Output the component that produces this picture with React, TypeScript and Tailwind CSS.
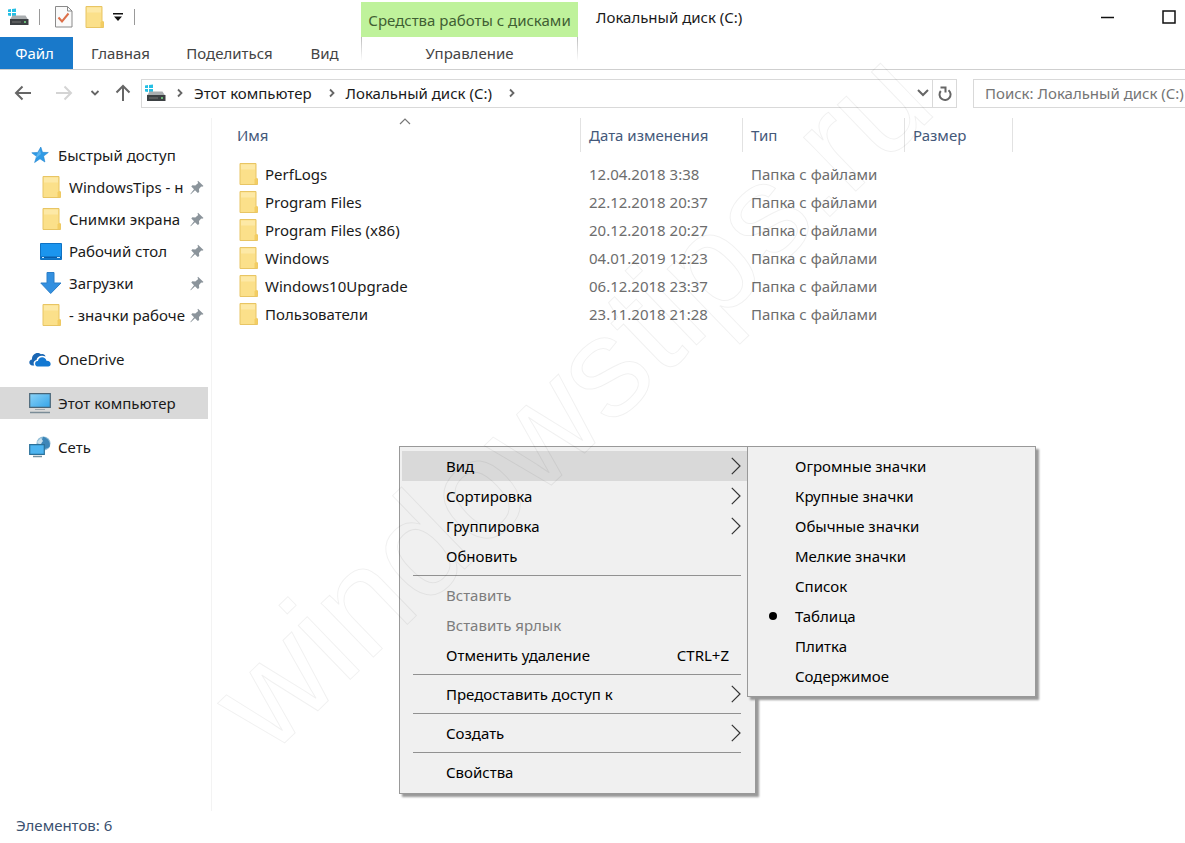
import React, { useState } from "react";
import clsx from "clsx";

type MenuEntry =
    | { kind: "item"; label: string; disabled?: boolean; shortcut?: string; submenu?: boolean }
    | { kind: "separator" };

const files = [
    { name: "PerfLogs", date: "12.04.2018 3:38" },
    { name: "Program Files", date: "22.12.2018 20:37" },
    { name: "Program Files (x86)", date: "20.12.2018 20:27" },
    { name: "Windows", date: "04.01.2019 12:23" },
    { name: "Windows10Upgrade", date: "06.12.2018 23:37" },
    { name: "Пользователи", date: "23.11.2018 21:28" },
];

const menuEntries: MenuEntry[] = [
    { kind: "item", label: "Вид", submenu: true },
    { kind: "item", label: "Сортировка", submenu: true },
    { kind: "item", label: "Группировка", submenu: true },
    { kind: "item", label: "Обновить" },
    { kind: "separator" },
    { kind: "item", label: "Вставить", disabled: true },
    { kind: "item", label: "Вставить ярлык", disabled: true },
    { kind: "item", label: "Отменить удаление", shortcut: "CTRL+Z" },
    { kind: "separator" },
    { kind: "item", label: "Предоставить доступ к", submenu: true },
    { kind: "separator" },
    { kind: "item", label: "Создать", submenu: true },
    { kind: "separator" },
    { kind: "item", label: "Свойства" },
];

const viewModes = [
    "Огромные значки",
    "Крупные значки",
    "Обычные значки",
    "Мелкие значки",
    "Список",
    "Таблица",
    "Плитка",
    "Содержимое",
];

const FolderIcon = () => (
    <svg width="19" height="22" viewBox="0 0 19 22" className="shrink-0">
        <path d="M1 .5h16v14l1.500 1.500v5.500H1z" fill="#fbe08a" stroke="#e8c564" />
        <path d="M2 1.500h14v5H2z" fill="#fde9a6" />
        <path d="M15.500 21v-4.500l1.500-2 1.500 1.500V21z" fill="#f3cd63" />
    </svg>
);

const DriveIcon = () => (
    <svg width="21" height="18" viewBox="0 0 21 18" className="shrink-0">
        <path d="M0 1.500l3-.5v3H0zM4 1l4-.5V4H4zM0 5h3v3l-3-.5zM4 5h4v3.500L4 8z" fill="#25bfe4" />
        <path d="M4.500 7.500h13l2.500 4H2z" fill="#a9adaf" />
        <path d="M2 11h18.500v6H2z" fill="#3c4043" />
        <path d="M4 14h9" stroke="#777" />
        <path d="M16 14h2" stroke="#7be08a" strokeWidth="1.500" />
    </svg>
);

const StarIcon = () => (
    <svg width="18" height="18" viewBox="0 0 18 18">
        <path d="M9.800 1l1.700 5.300 5.800.2-4.700 3.600 1.300 5.900-4.900-3.200-5.400 3.700 2-6L.8 6.800l6-.4z" fill="#2f9be6" stroke="#1e83d0" strokeWidth=".6" />
        <path d="M9 4l1 4-6 5 2-4.500z" fill="#7cc6f5" opacity=".6" />
    </svg>
);

const DesktopIcon = () => (
    <svg width="22" height="17" viewBox="0 0 22 17">
        <path d="M.5 .5h21v16H.5z" fill="#1b95ee" stroke="#0e72c4" />
        <path d="M1 14.500h20" stroke="#0a5ca8" strokeWidth="2" />
        <path d="M2 14.500h2M17 14.500h3" stroke="#cbe7fb" />
    </svg>
);

const DownloadIcon = () => (
    <svg width="22" height="22" viewBox="0 0 22 22">
        <path d="M7 .5h7V11h7L10.700 21.500.8 11H7z" fill="#3390e0" stroke="#2b7ec8" />
    </svg>
);

const PinIcon = () => (
    <svg width="14" height="15" viewBox="0 0 14 15" className="shrink-0">
        <path d="M8 .8L13.500 6l-1.300.8-1-.2L9 9l.2 3-1.400.9L5 10.200.8 14.300.3 14 4 9.200 1.300 6.500l1-1.200 3 .1L8.200 3 7.500 1.800z" fill="#8b949b" />
    </svg>
);

const CloudIcon = () => (
    <svg width="22" height="15" viewBox="0 0 22 15">
        <path d="M3 13.500C-.8 12.500-.3 7.800 3 7.500 2.500 2 8.500-1 12 2.300c2-.8 4 .2 4.600 2.200C11.500 2.500 8 5 7.500 8 4.500 8.500 4 11.500 5.300 13.500z" fill="#1a66b3" />
        <path d="M8.500 14.500c-3.500-.5-3-5.700.4-5.400.6-5 7.700-5 8.600-.3 4.800-.3 5.500 5.200 1.700 5.700z" fill="#1378d2" />
    </svg>
);

const ComputerIcon = () => (
    <svg width="22" height="21" viewBox="0 0 22 21">
        <defs>
            <linearGradient id="screen" x1="0" y1="0" x2="1" y2="1">
                <stop offset="0" stopColor="#8bd3f8" />
                <stop offset="1" stopColor="#35a4e8" />
            </linearGradient>
        </defs>
        <path d="M.7 .7h20.600v13.600H.7z" fill="url(#screen)" stroke="#4a6577" strokeWidth="1.200" />
        <path d="M6 16.500h10" stroke="#a0a8ad" />
        <path d="M1 19.500h20" stroke="#7b8c97" strokeWidth="1.500" />
    </svg>
);

const NetworkIcon = () => (
    <svg width="22" height="22" viewBox="0 0 22 22">
        <circle cx="14.500" cy="7.500" r="7" fill="#8fbcd6" />
        <path d="M14 .7c5 1 8 6 6.500 10.500L16 13l-4-6z" fill="#3d86b8" />
        <path d="M8 6l4-4 2 3-3 4z" fill="#c9dfeb" />
        <path d="M.7 8.700h14.600v9.600H.7z" fill="#4db4f0" stroke="#2b7099" strokeWidth="1.200" />
        <path d="M4 20.500h9" stroke="#76919f" strokeWidth="1.500" />
    </svg>
);

// Small chevron used in the address bar; rotated for the other directions
const Chevron = ({ className }: { className?: string }) => (
    <svg width="8" height="10" viewBox="0 0 8 10" fill="none" stroke="currentColor" strokeWidth="1.800" className={className}>
        <path d="M2 1.500L5.500 5 2 8.500" />
    </svg>
);

const MenuArrow = () => (
    <svg width="10" height="18" viewBox="0 0 10 18" fill="none" stroke="#333" strokeWidth="1.200">
        <path d="M.8 .8L9 9 .8 17.200" />
    </svg>
);

const Arrow = ({ className }: { className?: string }) => (
    <svg width="18" height="16" viewBox="0 0 18 16" fill="none" stroke="currentColor" strokeWidth="2" className={className}>
        <path d="M17 8H2M8.500 1.500L2 8l6.500 6.500" />
    </svg>
);

const TitleBar = () => (
    <header className="flex h-[70px] border-b border-[#cfcfcf]">
        <div className="flex w-[361px] shrink-0 flex-col">
            <div className="flex h-[38px] items-center pb-1 pl-2">
                <DriveIcon />
                <span className="ml-[10px] h-4 w-px bg-[#999]" />
                <button aria-label="Свойства" className="ml-[15px]">
                    <svg width="18" height="22" viewBox="0 0 18 22" fill="none">
                        <path d="M.5 .5h12l4.500 4.500v16H.5z" fill="#fafafa" stroke="#8a8a8a" />
                        <path d="M12.500 .5V5H17" stroke="#8a8a8a" />
                        <path d="M3.500 11.500l3.500 4 6.500-8" stroke="#dc6f49" strokeWidth="2" />
                    </svg>
                </button>
                <button aria-label="Новая папка" className="ml-3">
                    <FolderIcon />
                </button>
                <button aria-label="Настройка панели" className="ml-[9px]">
                    <svg width="10" height="8" viewBox="0 0 10 8">
                        <path d="M0 0h10v1.500H0zM1 3.500h8L5 8z" fill="#111" />
                    </svg>
                </button>
                <span className="ml-[11px] h-4 w-px bg-[#999]" />
            </div>
            <nav className="flex h-8 text-[#444]">
                <button className="w-[73px] shrink-0 bg-[#1979ca] pr-1 text-white">Файл</button>
                <button className="w-[95px]">Главная</button>
                <button className="w-[123px]">Поделиться</button>
                <button className="w-[67px]">Вид</button>
            </nav>
        </div>
        <div className="flex w-[217px] shrink-0 flex-col">
            <div className="flex h-[38px] items-center justify-center border-t-2 border-white bg-[#bff29b] whitespace-nowrap text-[#3f5f33]">
                Средства работы с дисками
            </div>
            <div className="flex h-8 justify-between">
                <span className="h-6 w-px bg-linear-to-b from-[#bbb] to-white" />
                <button className="text-[#444]">Управление</button>
                <span className="h-6 w-px bg-linear-to-b from-[#bbb] to-white" />
            </div>
        </div>
        <h1 className="h-[38px] flex-1 pt-[7px] pl-[18px]">Локальный диск (C:)</h1>
        <div className="flex h-[34px] items-center gap-12 pr-[9px]">
            <button aria-label="Свернуть">
                <svg width="13" height="13" viewBox="0 0 13 13" stroke="#111" strokeWidth="1.500">
                    <path d="M0 6.500h13" />
                </svg>
            </button>
            <button aria-label="Развернуть">
                <svg width="14" height="14" viewBox="0 0 14 14" fill="none" stroke="#111" strokeWidth="1.500">
                    <path d="M1 1h12v12H1z" />
                </svg>
            </button>
        </div>
    </header>
);

const AddressBar = () => (
    <div className="flex h-12 items-center pb-[2px]">
        <div className="flex w-[141px] shrink-0 items-center pl-[14px] text-[#666]">
            <button aria-label="Назад"><Arrow /></button>
            <button aria-label="Вперёд" className="ml-[23px] text-[#d4d4d4]"><Arrow className="rotate-180" /></button>
            <button aria-label="Последние" className="ml-[18px]"><Chevron className="rotate-90" /></button>
            <button aria-label="Вверх" className="ml-[15px]"><Arrow className="rotate-90" /></button>
        </div>
        <div className="flex h-[29px] min-w-0 flex-1 items-center border border-[#d9d9d9] pl-[3px] text-[#666]">
            <DriveIcon />
            <Chevron className="ml-[10px]" />
            <button className="ml-[10px] whitespace-nowrap text-[#1a1a1a]">Этот компьютер</button>
            <Chevron className="ml-4" />
            <button className="ml-[10px] whitespace-nowrap text-[#1a1a1a]">Локальный диск (C:)</button>
            <Chevron className="ml-4" />
            <button aria-label="Предыдущие расположения" className="ml-auto pr-[3px]">
                <svg width="12" height="8" viewBox="0 0 12 8" fill="none" stroke="#666" strokeWidth="2">
                    <path d="M1 1l5 5 5-5" />
                </svg>
            </button>
            <button aria-label="Обновить" className="flex h-full w-6 items-center justify-center border-l border-[#d9d9d9]">
                <svg width="14" height="15" viewBox="0 0 14 15" fill="none" stroke="#666" strokeWidth="2">
                    <path d="M2.800 5a5.500 5.500 0 1 0 7.700-.800" />
                    <path d="M2.500 1.500h5v5" />
                </svg>
            </button>
        </div>
        <input
            type="text"
            aria-label="Поиск"
            placeholder="Поиск: Локальный диск (C:)"
            className="ml-4 h-[29px] w-[212px] shrink-0 border border-r-0 border-[#d9d9d9] pl-[11px] outline-none placeholder:text-[#757575]"
        />
    </div>
);

interface QuickLinkProps {
    icon: React.ReactNode;
    label: string;
}

const QuickLink: React.FC<QuickLinkProps> = ({ icon, label }) => (
    <li>
        <a href="#" className="flex h-8 items-center pl-10">
            <span className="flex w-[22px] shrink-0 justify-center">{icon}</span>
            <span className="ml-[7px] w-[118px] overflow-hidden whitespace-nowrap">{label}</span>
            <span className="ml-[3px]"><PinIcon /></span>
        </a>
    </li>
);

const SideLink: React.FC<QuickLinkProps & { selected?: boolean }> = ({ icon, label, selected }) => (
    <a href="#" className={clsx("flex h-8 items-center pl-[29px]", selected && "bg-[#d9d9d9]")}>
        <span className="flex w-[22px] shrink-0 justify-center">{icon}</span>
        <span className="ml-[7px] whitespace-nowrap">{label}</span>
    </a>
);

const Sidebar = () => (
    <nav className="w-[212px] shrink-0 border-r border-[#f3f3f3] pt-[21px] pr-[3px] text-[#1a1a1a]">
        <div className="flex flex-col gap-3">
            <div>
                <SideLink icon={<StarIcon />} label="Быстрый доступ" />
                <ul>
                    <QuickLink icon={<FolderIcon />} label="WindowsTips - н" />
                    <QuickLink icon={<FolderIcon />} label="Снимки экрана" />
                    <QuickLink icon={<DesktopIcon />} label="Рабочий стол" />
                    <QuickLink icon={<DownloadIcon />} label="Загрузки" />
                    <QuickLink icon={<FolderIcon />} label="- значки рабоче" />
                </ul>
            </div>
            <SideLink icon={<CloudIcon />} label="OneDrive" />
            <SideLink icon={<ComputerIcon />} label="Этот компьютер" selected />
            <SideLink icon={<NetworkIcon />} label="Сеть" />
        </div>
    </nav>
);

const FileTable = () => (
    <table className="w-[801px] table-fixed text-left whitespace-nowrap">
        <colgroup>
            <col className="w-[369px]" />
            <col className="w-[162px]" />
            <col className="w-[162px]" />
            <col className="w-[108px]" />
        </colgroup>
        <thead>
            <tr>
                {["Имя", "Дата изменения", "Тип", "Размер"].map((title, i) => (
                    <th key={title} className="relative p-0 pb-2 font-normal text-[#44597a]">
                        <div className={clsx("flex h-[34px] items-center border-r border-[#e2e2e2]", i === 0 ? "pl-[25px]" : "pl-2")}>
                            {title}
                        </div>
                        {i === 0 && (
                            <svg width="12" height="7" viewBox="0 0 12 7" fill="none" stroke="#777" strokeWidth="1.200" className="absolute top-0 left-[187px]">
                                <path d="M1 6l5-5 5 5" />
                            </svg>
                        )}
                    </th>
                ))}
            </tr>
        </thead>
        <tbody>
            {files.map((file) => (
                <tr key={file.name} className="h-7 text-[#6d6d6d]">
                    <td className="p-0 pl-[27px] text-[#1a1a1a]">
                        <span className="flex items-center gap-[7px]">
                            <FolderIcon />
                            {file.name}
                        </span>
                    </td>
                    <td className="p-0 pl-2">{file.date}</td>
                    <td className="p-0 pl-2">Папка с файлами</td>
                    <td className="p-0" />
                </tr>
            ))}
        </tbody>
    </table>
);

const ContextMenu = () => {
    const [active, setActive] = useState("Вид");

    return (
        <div role="menu" className="absolute top-[446px] left-[399px] w-[357px] border border-[#999] bg-[#f0f0f0] px-[2px] pt-1 pb-[6px] shadow-[3px_3px_2px_#999]">
            {menuEntries.map((entry, i) =>
                entry.kind === "separator" ? (
                    <hr key={i} className="my-1 mr-3 ml-[11px] border-[#919191]" />
                ) : (
                    <button
                        key={i}
                        role="menuitem"
                        disabled={entry.disabled}
                        onMouseEnter={() => setActive(entry.label)}
                        className={clsx(
                            "flex h-[30px] w-full items-center justify-between pr-3 pl-11 text-black disabled:text-[#7d7d7d]",
                            active === entry.label && "bg-[#d9d9d9]"
                        )}
                    >
                        <span>{entry.label}</span>
                        {entry.shortcut && <span className="pr-3">{entry.shortcut}</span>}
                        {entry.submenu && <MenuArrow />}
                    </button>
                )
            )}
        </div>
    );
};

const ViewSubmenu = () => {
    const [mode, setMode] = useState("Таблица");

    return (
        <div role="menu" className="absolute top-[446px] left-[747px] w-[289px] border border-[#999] bg-[#f0f0f0] px-[2px] pt-1 pb-[5px] shadow-[3px_3px_2px_#999]">
            {viewModes.map((label) => (
                <button
                    key={label}
                    role="menuitemradio"
                    aria-checked={mode === label}
                    onClick={() => setMode(label)}
                    className="flex h-[30px] w-full items-center text-black"
                >
                    <span className="flex w-[45px] justify-center">
                        {mode === label && <span className="size-2 rounded-full bg-black" />}
                    </span>
                    {label}
                </button>
            ))}
        </div>
    );
};

const App = () => (
    <div className="relative flex min-h-screen flex-col overflow-hidden bg-white font-['Noto_Sans','Open_Sans',sans-serif] text-[15px] leading-5 text-[#1a1a1a]">
        <TitleBar />
        <AddressBar />
        <div className="flex flex-1">
            <Sidebar />
            <main className="min-w-0 flex-1">
                <FileTable />
            </main>
        </div>
        <footer className="flex h-8 items-center pb-1 pl-4 text-[#3b5170]">Элементов: 6</footer>
        <ContextMenu />
        <ViewSubmenu />
        <div
            aria-hidden="true"
            className="pointer-events-none absolute top-[631px] left-[285px] origin-bottom-left -rotate-44 font-['Liberation_Sans',sans-serif] text-[142px] leading-[142px] whitespace-nowrap text-transparent [-webkit-text-stroke:1px_rgba(0,0,0,0.06)]"
        >
            windowstips.ru
        </div>
    </div>
);

export default App;
